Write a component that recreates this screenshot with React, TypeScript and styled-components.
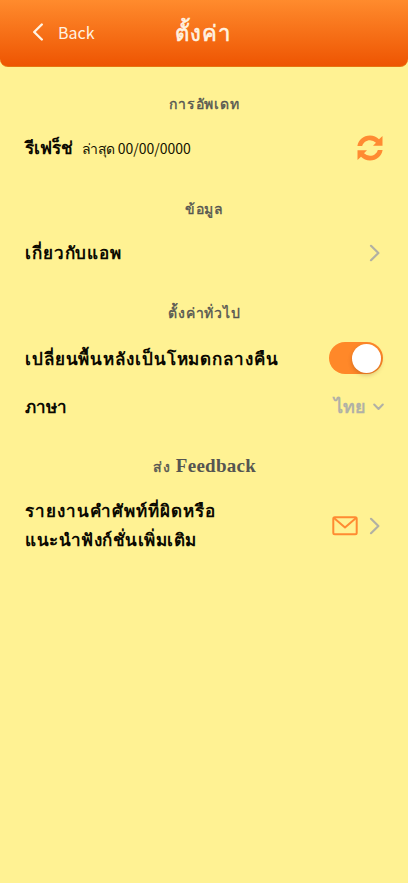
import React from 'react';
import styled, { createGlobalStyle } from 'styled-components';

const GlobalStyle = createGlobalStyle`
  * { box-sizing: border-box; }
  body { margin: 0; background: #fff293; font-family: "Noto Sans", sans-serif; }
`;

const Screen = styled.main`
  min-height: 883px;
  background: #fff293;
`;

const Header = styled.header`
  display: grid;
  grid-template-columns: 1fr auto 1fr;
  align-items: center;
  height: 67px;
  padding: 0 34px 2px 32px;
  border-radius: 0 0 8px 8px;
  background: linear-gradient(#ff8b2d, #ee5502);
  border-bottom: 1px solid #e8740f;
  color: #fff3e2;
`;

const BackButton = styled.button`
  display: flex;
  align-items: center;
  gap: 14px;
  padding: 0;
  border: 0;
  background: none;
  color: inherit;
  font: 400 16px/20px "Noto Sans CJK SC", sans-serif;
`;

const Title = styled.h1`
  margin: 0;
  font-size: 22px;
  line-height: 30px;
  font-weight: 500;
  letter-spacing: 1px;
  -webkit-text-stroke: 0.6px currentColor;
`;

const Section = styled.section<{ $gap: number }>`
  padding: 0 24px 0 25px;
  margin-top: ${(p) => p.$gap}px;
`;

const SectionTitle = styled.h2`
  display: flex;
  justify-content: center;
  align-items: baseline;
  gap: 5px;
  margin: 0;
  height: 24px;
  font-size: 14px;
  line-height: 23px;
  font-weight: 500;
  letter-spacing: 0.9px;
  -webkit-text-stroke: 0.4px currentColor;
  color: #555551;
`;

const Latin = styled.span`
  font: 700 19px/22px "Liberation Serif", serif;
  letter-spacing: 0.25px;
  -webkit-text-stroke: 0;
`;

const Row = styled.div<{ $height: number }>`
  display: flex;
  align-items: center;
  justify-content: space-between;
  height: ${(p) => p.$height}px;
`;

const Label = styled.span<{ $spacing?: number }>`
  font-size: 17px;
  line-height: 29px;
  font-weight: 700;
  letter-spacing: ${(p) => p.$spacing ?? 0.9}px;
  padding-bottom: 2px;
  white-space: nowrap;
  color: #0b0900;
`;

const LabelGroup = styled.div`
  display: flex;
  align-items: baseline;
  gap: 8px;
`;

const Stack = styled.div`
  display: flex;
  flex-direction: column;

  ${Label} { padding-bottom: 0; }
  padding-bottom: 2px;
`;

const Note = styled.span`
  font: 400 14px/20px "Noto Sans CJK SC", sans-serif;
  color: #151300;
`;

const NoteLabel = styled.span`
  letter-spacing: -0.5px;
`;

const Actions = styled.div<{ $gap: number; $inset?: number }>`
  display: flex;
  align-items: center;
  gap: ${(p) => p.$gap}px;
  margin-right: ${(p) => p.$inset ?? 0}px;
`;

const Toggle = styled.button`
  display: flex;
  justify-content: flex-end;
  align-items: center;
  width: 54px;
  height: 32px;
  padding: 0 2px;
  margin: 0 1px 2px 0;
  border: 0;
  border-radius: 16px;
  background: #ff8829;
`;

const Knob = styled.span`
  width: 29px;
  height: 29px;
  border-radius: 50%;
  background: #fff;
  box-shadow: 0 2px 4px rgba(90, 40, 0, 0.25);
`;

const Language = styled.span`
  font-size: 18px;
  line-height: 28px;
  font-weight: 600;
  padding-bottom: 2px;
  color: #b1b1a6;
`;

const Icon = styled.svg`
  display: block;
  flex: none;
  fill: none;
  stroke-linecap: round;
  stroke-linejoin: round;
`;

const ChevronRight = () => (
  <Icon width="12" height="18" viewBox="0 0 12 18" stroke="#b2b1a3" strokeWidth="2.2">
    <path d="M2 1.8 9.4 9 2 16.2" />
  </Icon>
);

const RefreshIcon = () => (
  <Icon width="26" height="26" viewBox="0 0 26 26">
    <g fill="#ff8b32">
      <path d="M.4 11C1.3 5 6.5.5 13 .5c3.6 0 6.7 1.4 9 3.7L25.5.9v9.8H16l3-3A8.7 8.7 0 0 0 13 5.2C9.2 5.2 6.2 7.5 5.2 11Z" />
      <path d="M25.6 15C24.7 21 19.5 25.5 13 25.5c-3.6 0-6.7-1.4-9-3.7L.5 25.1v-9.8H10l-3 3a8.7 8.7 0 0 0 6 2.5c3.8 0 6.8-2.3 7.8-5.8Z" />
    </g>
  </Icon>
);

const MailIcon = () => (
  <Icon width="26" height="20" viewBox="0 0 26 20" stroke="#ff8b32" strokeWidth="2">
    <rect x="1.3" y="1.3" width="23.4" height="17" rx="1.5" />
    <path d="m2 2 11 9.500 11-9.500" />
  </Icon>
);

export default function App() {
  return (
    <>
      <GlobalStyle />
      <Screen>
        <Header>
          <BackButton>
            <Icon width="12" height="18" viewBox="0 0 12 18" stroke="#fff3e2" strokeWidth="2.4">
              <path d="M9.8 1.5 2.2 9l7.6 7.5" />
            </Icon>
            Back
          </BackButton>
          <Title>ตั้งค่า</Title>
          <span />
        </Header>
        <Section $gap={25}>
          <SectionTitle>การอัพเดท</SectionTitle>
          <Row $height={64}>
            <LabelGroup>
              <Label $spacing={0.1}>รีเฟร็ช่</Label>
              <Note><NoteLabel>ล่าสุด</NoteLabel> 00/00/0000</Note>
            </LabelGroup>
            <Actions $gap={0} $inset={1}><RefreshIcon /></Actions>
          </Row>
        </Section>
        <Section $gap={17}>
          <SectionTitle>ข้อมูล</SectionTitle>
          <Row $height={64}>
            <Label>เกี่ยวกับแอพ</Label>
            <Actions $gap={0} $inset={3}><ChevronRight /></Actions>
          </Row>
        </Section>
        <Section $gap={16}>
          <SectionTitle>ตั้งค่าทั่วไป</SectionTitle>
          <Row $height={68}>
            <Label>เปลี่ยนพื้นหลังเป็นโหมดกลางคืน</Label>
            <Toggle role="switch" aria-checked="true"><Knob /></Toggle>
          </Row>
          <Row $height={28}>
            <Label $spacing={0.1}>ภาษา</Label>
            <Actions $gap={7}>
              <Language>ไทย</Language>
              <Icon width="11" height="8" viewBox="0 0 11 8" stroke="#b1b1a6" strokeWidth="2">
                <path d="m1.2 1.5 4.3 4.500 4.300-4.500" />
              </Icon>
            </Actions>
          </Row>
        </Section>
        <Section $gap={34}>
          <SectionTitle>
            <span>ส่ง</span>
            <Latin>Feedback</Latin>
          </SectionTitle>
          <Row $height={94}>
            <Stack>
              <Label $spacing={1}>รายงานคำศัพท์ที่ผิดหรือ</Label>
              <Label $spacing={0.5}>แนะนำฟังก์ชั่นเพิ่มเติม</Label>
            </Stack>
            <Actions $gap={11} $inset={3}><MailIcon /><ChevronRight /></Actions>
          </Row>
        </Section>
      </Screen>
    </>
  );
}
